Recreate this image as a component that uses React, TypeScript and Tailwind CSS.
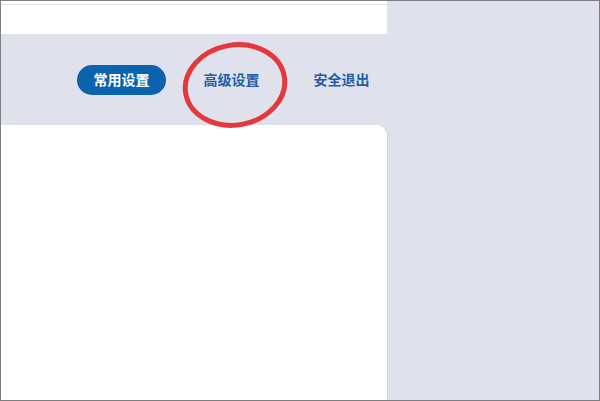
import React from 'react';

const font = { fontFamily: '"Noto Sans CJK SC", "Noto Sans", sans-serif' };

function NavItem({ label, active }: { label: string; active?: boolean }) {
  if (active) {
    return (
      <div className="h-[30px] w-[89px] rounded-full bg-[#0b63ad] flex items-center justify-center text-white text-[14px] font-bold">
        {label}
      </div>
    );
  }
  return (
    <div className="h-[30px] w-[89px] flex items-center justify-center text-[#1f5ea5] text-[14px] font-bold">
      {label}
    </div>
  );
}

export default function App() {
  return (
    <div
      className="relative w-[600px] h-[401px] overflow-hidden border border-[#7f7f7f] bg-[#dfe1ec] flex"
      style={font}
    >
      <div className="w-[386px] flex flex-col">
        <div className="h-[33px] bg-white pt-[3px]">
          <div className="h-px bg-[#e2e2e6]" />
        </div>
        <nav className="h-[91px] flex items-center gap-[21px] pl-[76px]">
          <NavItem label="常用设置" active />
          <NavItem label="高级设置" />
          <NavItem label="安全退出" />
        </nav>
        <div className="flex-1 bg-white rounded-tr-[10px] shadow-[1px_0_1px_rgba(0,0,0,0.06)]" />
      </div>
      <div className="flex-1" />

      {/* red hand-drawn circle around 高级设置 */}
      <svg
        className="absolute left-0 top-0 pointer-events-none"
        width="600"
        height="401"
        viewBox="0 0 600 401"
      >
        <ellipse
          cx="234"
          cy="84"
          rx="50"
          ry="40"
          transform="rotate(-10 234 84)"
          fill="none"
          stroke="#e5373c"
          strokeWidth="5"
        />
      </svg>
    </div>
  );
}
